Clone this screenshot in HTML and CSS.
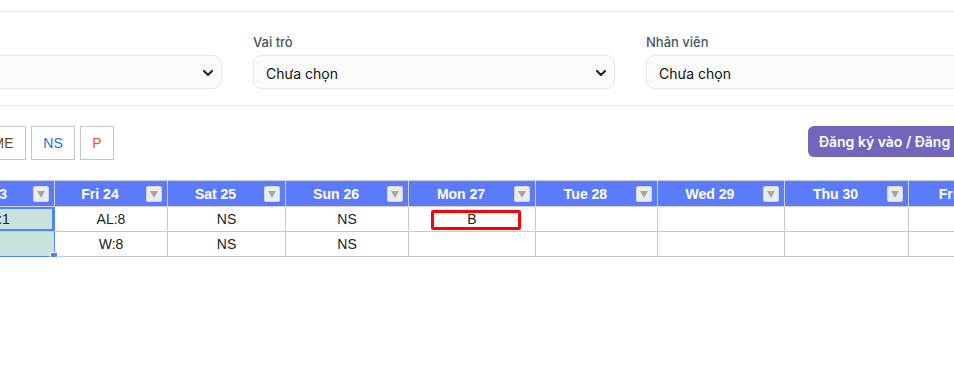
FILE: index.html
```html
<!DOCTYPE html>
<html lang="vi">
<head>
  <meta charset="UTF-8">
  <meta name="viewport" content="width=device-width, initial-scale=1.0">
  <title>Bảng chấm công</title>
  <link rel="stylesheet" href="styles.css">
</head>
<body>
  <div class="page">
    <div class="topbar"></div>

    <div class="filters">
      <div class="field">
        <label>Phòng ban</label>
        <div class="select">
          <span>Chưa chọn</span>
          <svg class="chevron" viewBox="0 0 12 12"><path d="M2 4l4 4 4-4"/></svg>
        </div>
      </div>
      <div class="field">
        <label>Vai trò</label>
        <div class="select">
          <span>Chưa chọn</span>
          <svg class="chevron" viewBox="0 0 12 12"><path d="M2 4l4 4 4-4"/></svg>
        </div>
      </div>
      <div class="field">
        <label>Nhân viên</label>
        <div class="select">
          <span>Chưa chọn</span>
          <svg class="chevron" viewBox="0 0 12 12"><path d="M2 4l4 4 4-4"/></svg>
        </div>
      </div>
    </div>

    <div class="toolbar">
      <div class="codes">
        <button class="code code-al">AL</button>
        <button class="code code-me">ME</button>
        <button class="code code-ns">NS</button>
        <button class="code code-p">P</button>
      </div>
      <button class="btn-primary">Đăng ký vào / Đăng ký ra</button>
    </div>

    <div class="sheet">
      <table class="grid">
        <colgroup>
          <col style="width:118px">
          <col style="width:113px">
          <col style="width:118px">
          <col style="width:123px">
          <col style="width:127px">
          <col style="width:122px">
          <col style="width:127px">
          <col style="width:124px">
          <col style="width:120px">
        </colgroup>
        <thead>
          <tr>
            <th><span class="day">Thu 23</span><span class="filter"></span></th>
            <th><span class="day">Fri 24</span><span class="filter"></span></th>
            <th><span class="day">Sat 25</span><span class="filter"></span></th>
            <th><span class="day">Sun 26</span><span class="filter"></span></th>
            <th><span class="day">Mon 27</span><span class="filter"></span></th>
            <th><span class="day">Tue 28</span><span class="filter"></span></th>
            <th><span class="day">Wed 29</span><span class="filter"></span></th>
            <th><span class="day">Thu 30</span><span class="filter"></span></th>
            <th><span class="day">Fri 31</span><span class="filter"></span></th>
          </tr>
        </thead>
        <tbody>
          <tr>
            <td class="selected active">AL:1</td>
            <td>AL:8</td>
            <td>NS</td>
            <td>NS</td>
            <td class="marked">B<span class="mark"></span></td>
            <td></td>
            <td></td>
            <td></td>
            <td></td>
          </tr>
          <tr>
            <td class="selected last"><span class="handle"></span></td>
            <td>W:8</td>
            <td>NS</td>
            <td>NS</td>
            <td></td>
            <td></td>
            <td></td>
            <td></td>
            <td></td>
          </tr>
        </tbody>
      </table>
    </div>
  </div>
</body>
</html>
```

FILE: styles.css
```css
body {
  margin: 0;
  background: #fff;
  font-family: 'Inter', 'Noto Sans', sans-serif;
  color: #111827;
  overflow: hidden;
}

.page {
  width: 1148px;
  margin-left: -140px;
}

.topbar {
  height: 11px;
  border-bottom: 1px solid #e8e9ee;
}

.filters {
  display: grid;
  grid-template-columns: repeat(3, 362px);
  gap: 31px;
  padding: 21px 0 16px;
  border-bottom: 1px solid #e8e9ee;
}

.field label {
  display: block;
  font-size: 13px;
  line-height: 18px;
  font-weight: 500;
  color: #4b5563;
  margin-bottom: 4px;
}

.select {
  height: 34px;
  box-sizing: border-box;
  border: 1px solid #e6e8ec;
  border-radius: 8px;
  background: #fafafa;
  display: flex;
  align-items: center;
  justify-content: space-between;
  padding: 2px 7px 0 12px;
  font-size: 14px;
  color: #111;
}

.chevron {
  width: 12px;
  height: 12px;
  fill: none;
  stroke: #1f2430;
  stroke-width: 2.2;
  stroke-linecap: round;
  stroke-linejoin: round;
}

.toolbar {
  display: flex;
  align-items: flex-start;
  justify-content: space-between;
  margin-top: 20px;
  padding-left: 71px;
}

.codes {
  display: flex;
  gap: 5px;
}

.code {
  height: 34px;
  padding: 0;
  border: 1px solid #c6c6c6;
  background: #fff;
  font-family: 'Liberation Sans', Arial, sans-serif;
  font-size: 14px;
}

.code-al { width: 44px; color: #2e7d32; }
.code-me { width: 46px; color: #6b4a12; }
.code-ns { width: 44px; color: #1a73d9; }
.code-p { width: 34px; color: #e65a14; }

.btn-primary {
  height: 31px;
  padding: 0 21px 0 11px;
  border: none;
  border-radius: 6px;
  background: #7166bb;
  color: #fff;
  font-family: 'Inter', 'Noto Sans', sans-serif;
  font-size: 14px;
  font-weight: 600;
  white-space: nowrap;
}

.sheet {
  margin-top: 20px;
  margin-left: 76px;
}

.grid {
  width: 1092px;
  border-collapse: collapse;
  table-layout: fixed;
  font-family: 'Liberation Sans', Arial, sans-serif;
  font-size: 14px;
}

.grid th {
  position: relative;
  height: 25px;
  padding: 0 22px 0 0;
  background: #5c7bfb;
  color: #fff;
  font-weight: bold;
  font-size: 14px;
  text-align: center;
  border: 1px solid #cdd0d8;
}

.filter {
  position: absolute;
  right: 5px;
  top: 5px;
  width: 16px;
  height: 16px;
  box-sizing: border-box;
  background: #ececec;
  border: 1px solid #d6d6d6;
  border-radius: 2px;
}

.filter::after {
  content: "";
  position: absolute;
  left: 3px;
  top: 4px;
  border-left: 4px solid transparent;
  border-right: 4px solid transparent;
  border-top: 7px solid #a6a6a6;
}

.grid td {
  height: 24px;
  padding: 0;
  border: 1px solid #cacaca;
  text-align: center;
  color: #222;
  white-space: nowrap;
  overflow: hidden;
}

.grid td.selected {
  background: #c9e2dc;
  border-right: 1px solid #4a86f7;
  position: relative;
  overflow: visible;
}

.grid td.active {
  box-shadow: inset 0 0 0 2px #4a86f7;
}

.grid td.last {
  border-bottom: 1px solid #4a86f7;
}

.handle {
  position: absolute;
  right: -4px;
  bottom: -4px;
  width: 6px;
  height: 6px;
  background: #4a86f7;
  border: 1px solid #fff;
  z-index: 2;
}

.grid td.marked {
  position: relative;
}

.mark {
  position: absolute;
  left: 22px;
  top: 3px;
  width: 90px;
  height: 20px;
  box-sizing: border-box;
  border: 3px solid #ff0000;
  border-radius: 2px;
}
```
